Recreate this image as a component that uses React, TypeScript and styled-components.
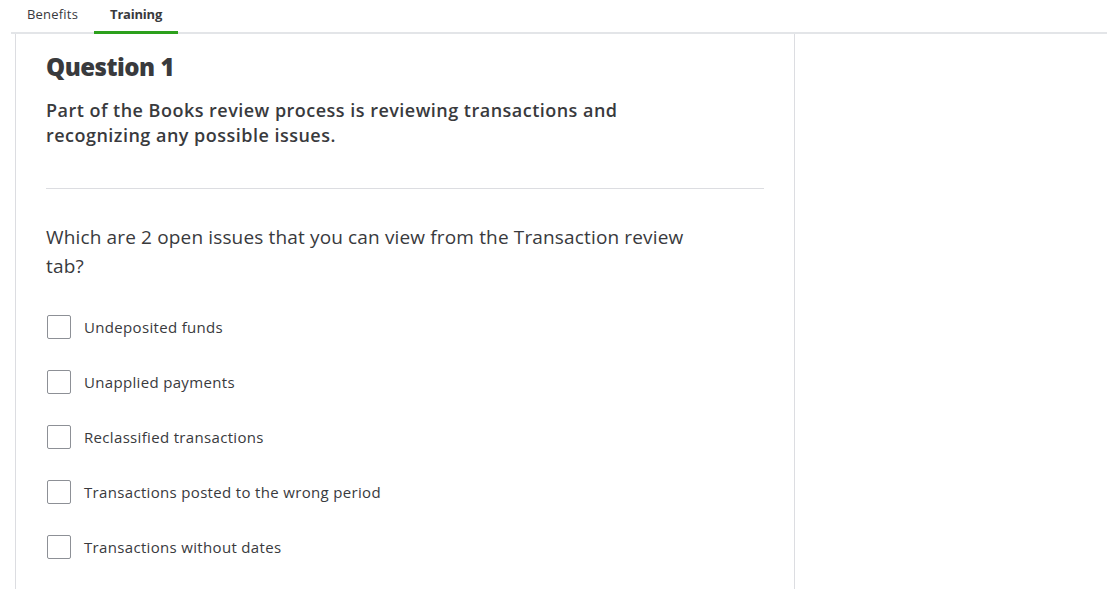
import styled, { createGlobalStyle } from 'styled-components'

const GlobalStyle = createGlobalStyle`
    body {
        margin: 0;
        background: #fff;
        font-family: 'Open Sans', Lato, sans-serif;
        color: #393a3d;
    }
`

interface TabProps {
    isActive?: boolean
}

const options = [
    'Undeposited funds',
    'Unapplied payments',
    'Reclassified transactions',
    'Transactions posted to the wrong period',
    'Transactions without dates',
]

const Page = styled.div`
    display: flex;
    flex-direction: column;
    height: 589px;
    overflow: hidden;
`

const TabBar = styled.nav`
    display: flex;
    height: 32px;
    margin-left: 11px;
    border-bottom: 2px solid #e3e5e8;
`

const Tab = styled.a<TabProps>`
    display: flex;
    align-items: center;
    padding: 0 16px 4px;
    margin-bottom: -2px;
    font-size: 13px;
    font-weight: ${(props) => props.isActive ? 700 : 400};
    letter-spacing: ${(props) => props.isActive ? -0.2 : 0.2}px;
    color: #393a3d;
    border-bottom: 3px solid ${(props) => props.isActive ? '#2ca01c' : 'transparent'};
    border-radius: 2px 2px 0 0;
    text-decoration: none;
    cursor: pointer;
`

const Panel = styled.section`
    flex: 1;
    width: 718px;
    margin-left: 15px;
    padding: 18px 30px 0;
    border-left: 1px solid #dcdde1;
    border-right: 1px solid #dcdde1;
`

const Title = styled.h2`
    margin: 0;
    font-size: 24px;
    font-weight: 800;
    letter-spacing: -0.5px;
    line-height: 30px;
`

const Intro = styled.p`
    margin: 16px 0 0;
    font-size: 18px;
    font-weight: 600;
    letter-spacing: 0.48px;
    line-height: 25px;
`

const Divider = styled.hr`
    margin: 40px 0 0;
    border: none;
    border-top: 1px solid #dcdde1;
`

const Prompt = styled.p`
    margin: 34px 0 0;
    font-size: 19px;
    letter-spacing: 0.15px;
    line-height: 29px;
`

const OptionList = styled.div`
    display: flex;
    flex-direction: column;
    gap: 31px;
    margin-top: 34px;
`

const Option = styled.label`
    display: flex;
    align-items: center;
    gap: 13px;
    font-size: 15px;
    letter-spacing: 0.33px;
    cursor: pointer;
`

const Box = styled.span`
    width: 22px;
    height: 22px;
    margin-left: 1px;
    border: 1px solid #8d9096;
    border-radius: 2px;
    background: #fff;
`

export default function App() {
    return (
        <Page>
            <GlobalStyle />
            <TabBar>
                <Tab>Benefits</Tab>
                <Tab isActive>Training</Tab>
            </TabBar>
            <Panel>
                <Title>Question 1</Title>
                <Intro>
                    Part of the Books review process is reviewing transactions and
                    <br />
                    recognizing any possible issues.
                </Intro>
                <Divider />
                <Prompt>
                    Which are 2 open issues that you can view from the Transaction review
                    <br />
                    tab?
                </Prompt>
                <OptionList>
                    {options.map((option) => (
                        <Option key={option}>
                            <Box />
                            {option}
                        </Option>
                    ))}
                </OptionList>
            </Panel>
        </Page>
    )
}
